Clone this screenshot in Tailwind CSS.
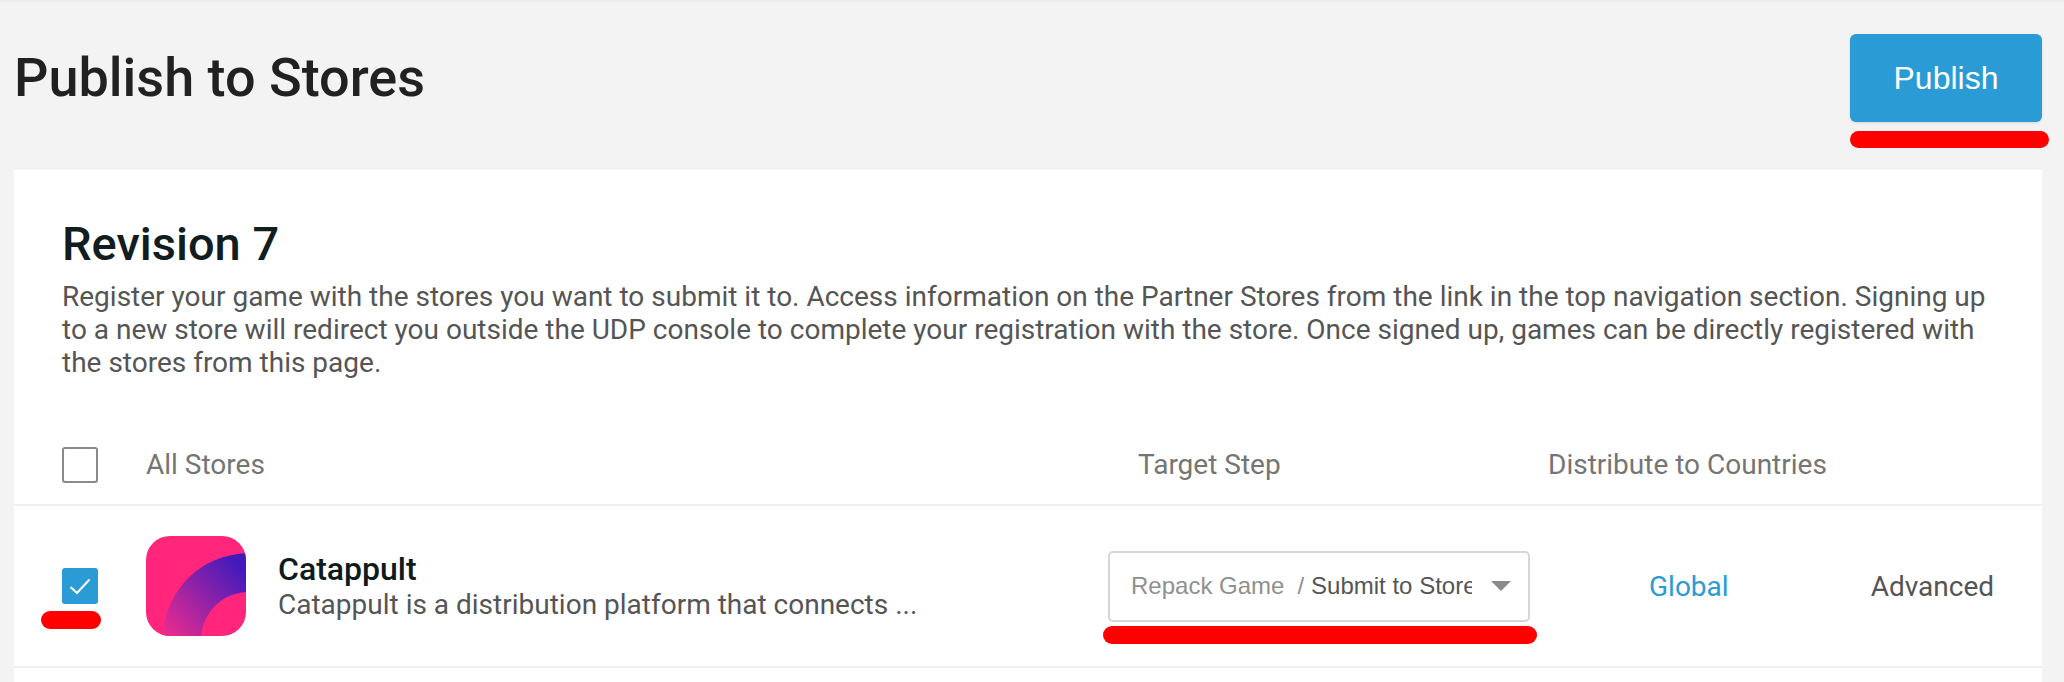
<!DOCTYPE html>
<html lang="en">
<head>
    <meta charset="UTF-8" />
    <title>Publish to Stores</title>
    <script src="https://cdn.jsdelivr.net/npm/@tailwindcss/browser@4"></script>
</head>
<body class="flex flex-col h-[682px] overflow-hidden bg-[#f3f3f3] font-['Roboto',sans-serif] border-t-2 border-[#ececec]">
    <!-- Page header -->
    <header class="flex items-start justify-between shrink-0 pl-[14px] pr-[22px] pt-[32px] h-[168px]">
        <h1 class="text-[54px] leading-[88px] font-medium text-[#212121]">Publish to Stores</h1>
        <div class="relative">
            <button class="w-[192px] h-[88px] rounded-[6px] bg-[#2a9bd4] text-white text-[32px] font-['Liberation_Sans',sans-serif] shadow-sm">Publish</button>
            <span class="absolute left-0 top-[97px] w-[199px] h-[17px] rounded-full bg-[#ff0000]"></span>
        </div>
    </header>

    <!-- Card -->
    <main class="flex-1 ml-[14px] mr-[22px] bg-white">
        <section class="pl-[48px] pr-[40px] pt-[46px]">
            <h2 class="text-[47px] leading-[56px] font-medium text-[#121d1f]">Revision 7</h2>
            <p class="mt-[8px] text-[28px] leading-[33px] text-[#555555]">Register your game with the stores you want to submit it to. Access information on the Partner Stores from the link in the top navigation section. Signing up to a new store will redirect you outside the UDP console to complete your registration with the store. Once signed up, games can be directly registered with the stores from this page.</p>
        </section>

        <!-- Table head -->
        <div class="flex items-center h-[105px] mt-[22px] pt-[24px] border-b-2 border-[#f0f0f0] text-[28px] text-[#757575]">
            <div class="ml-[48px] w-[36px] h-[36px] rounded-[3px] border-2 border-[#8a8a8a]"></div>
            <span class="ml-[48px] w-[992px]">All Stores</span>
            <span class="w-[410px]">Target Step</span>
            <span>Distribute to Countries</span>
        </div>

        <!-- Store row -->
        <div class="flex items-center h-[162px] border-b-2 border-[#f0f0f0]">
            <div class="relative ml-[48px] w-[36px] h-[36px] shrink-0">
                <div class="flex items-center justify-center w-full h-full rounded-[3px] bg-[#2a9bd4]">
                    <svg width="22" height="18" viewBox="0 0 22 18" fill="none" stroke="white" stroke-width="2"><path d="M1.5 10 L8 16 L20.5 2.5"/></svg>
                </div>
                <span class="absolute left-[-21px] top-[43px] w-[60px] h-[18px] rounded-full bg-[#ff0000]"></span>
            </div>
            <svg class="ml-[48px] shrink-0" width="100" height="100" viewBox="0 0 100 100">
                <defs>
                    <linearGradient id="arc" x1="100%" y1="15%" x2="10%" y2="100%">
                        <stop offset="0.05" stop-color="#421abc"/>
                        <stop offset="1" stop-color="#e62b90"/>
                    </linearGradient>
                    <clipPath id="tile"><rect width="100" height="100" rx="24"/></clipPath>
                </defs>
                <g clip-path="url(#tile)">
                    <rect width="100" height="100" fill="#ff267c"/>
                    <path d="M16 100 C22 50 55 20 100 17 L100 56 C75 58 58 76 55 100 Z" fill="url(#arc)"/>
                </g>
            </svg>
            <div class="ml-[32px] w-[830px] shrink-0">
                <div class="text-[32px] leading-[36px] font-medium text-[#0f1a1c]">Catappult</div>
                <div class="mt-[2px] text-[28px] leading-[32px] text-[#555555]">Catappult is a distribution platform that connects ...</div>
            </div>
            <div class="relative shrink-0">
                <div class="flex items-center w-[422px] h-[71px] rounded-[5px] border-2 border-[#d6d6d6] pl-[21px] font-['Liberation_Sans',sans-serif] text-[24px]">
                    <div class="w-[341px] shrink-0 overflow-hidden whitespace-nowrap">
                        <span class="text-[#909090]">Repack Game</span><span class="ml-[13px] text-[#909090]">/</span><span class="ml-[7px] text-[#555555]">Submit to Store</span>
                    </div>
                    <div class="ml-[19px] w-0 h-0 border-x-[10px] border-t-[10px] border-x-transparent border-t-[#8a8a8a]"></div>
                </div>
                <span class="absolute left-[-5px] top-[75px] w-[434px] h-[18px] rounded-full bg-[#ff0000]"></span>
            </div>
            <a class="ml-[119px] pt-[2px] text-[28px] text-[#2a9bd4]">Global</a>
            <span class="ml-[142px] pt-[2px] text-[28px] text-[#555555]">Advanced</span>
        </div>
    </main>
</body>
</html>
